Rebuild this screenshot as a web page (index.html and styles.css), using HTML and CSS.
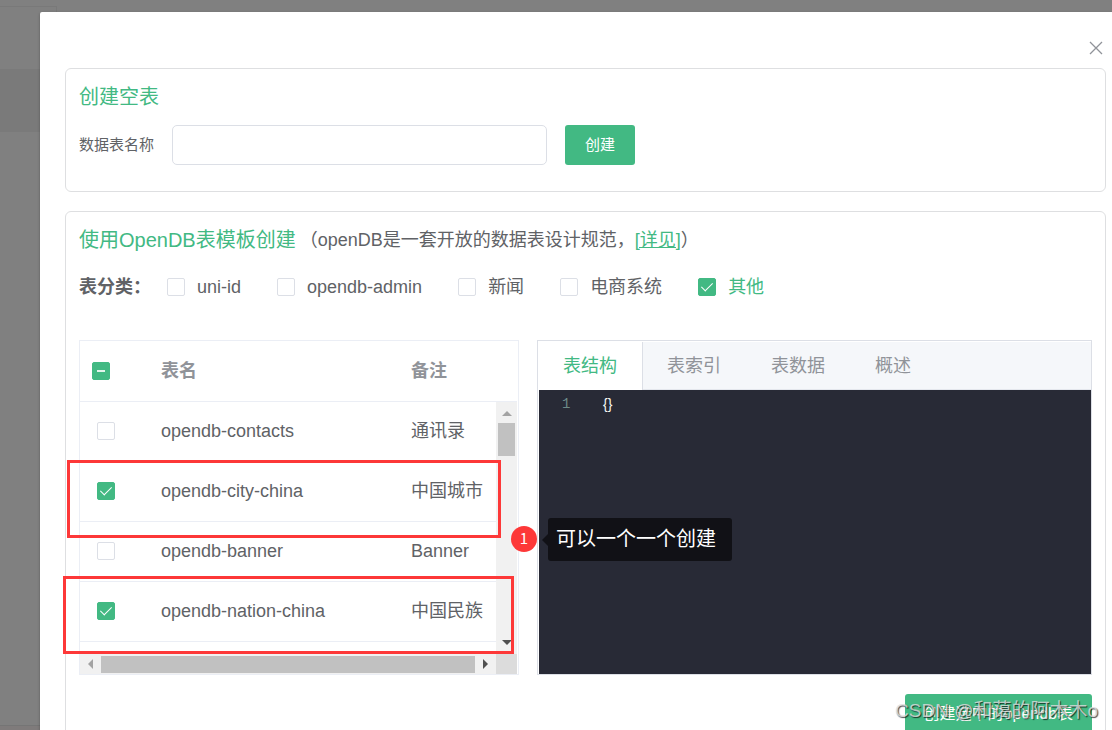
FILE: index.html
```html
<!DOCTYPE html>
<html lang="zh-CN">
<head>
<meta charset="utf-8">
<title>创建表</title>
<link rel="stylesheet" href="styles.css">
</head>
<body>
<div class="backdrop">
  <aside class="rail">
    <div class="rail-top"></div>
    <div class="rail-space"></div>
    <div class="rail-active"></div>
    <div class="rail-foot"></div>
  </aside>
  <main class="dialog" role="dialog" aria-label="创建表">
    <header class="dialog-head">
      <button class="close" type="button" aria-label="关闭">
        <svg width="14" height="14" viewBox="0 0 14 14"><path d="M1 1L13 13M13 1L1 13" fill="none" stroke="#909399" stroke-width="1.3"/></svg>
      </button>
    </header>

    <section class="card">
      <h2 class="title">创建空表</h2>
      <form class="create-form">
        <label for="table-name">数据表名称</label>
        <input class="text-input" id="table-name" type="text">
        <button class="btn" type="button">创建</button>
      </form>
    </section>

    <section class="card">
      <div class="title-row">
        <h2 class="title">使用OpenDB表模板创建</h2>
        <p class="note">（openDB是一套开放的数据表设计规范，<a href="#">[详见]</a>）</p>
      </div>
      <div class="filters">
        <strong class="filters-label">表分类：</strong>
        <label class="filter"><input class="check" type="checkbox"><span>uni-id</span></label>
        <label class="filter"><input class="check" type="checkbox"><span>opendb-admin</span></label>
        <label class="filter"><input class="check" type="checkbox"><span>新闻</span></label>
        <label class="filter"><input class="check" type="checkbox"><span>电商系统</span></label>
        <label class="filter filter-on"><input class="check" type="checkbox" checked><span>其他</span></label>
      </div>

      <div class="panels">
        <div class="list">
          <table class="table">
            <thead>
              <tr><th class="col-check"><input class="check check-mixed" type="checkbox" aria-label="全选"></th><th class="col-name">表名</th><th>备注</th></tr>
            </thead>
            <tbody>
              <tr><td class="col-check"><input class="check" type="checkbox" aria-label="opendb-contacts"></td><td>opendb-contacts</td><td>通讯录</td></tr>
              <tr><td class="col-check"><input class="check" type="checkbox" aria-label="opendb-city-china" checked></td><td>opendb-city-china</td><td>中国城市</td></tr>
              <tr><td class="col-check"><input class="check" type="checkbox" aria-label="opendb-banner"></td><td>opendb-banner</td><td>Banner</td></tr>
              <tr><td class="col-check"><input class="check" type="checkbox" aria-label="opendb-nation-china" checked></td><td>opendb-nation-china</td><td>中国民族</td></tr>
            </tbody>
          </table>
          <div class="vbar">
            <svg width="10" height="5" viewBox="0 0 10 5"><path d="M0 5L5 0L10 5Z" fill="#a3a3a3"/></svg>
            <div class="vthumb"></div>
            <svg class="arrow-down" width="10" height="5" viewBox="0 0 10 5"><path d="M0 0L5 5L10 0Z" fill="#505050"/></svg>
          </div>
          <div class="hbar">
            <svg width="5" height="10" viewBox="0 0 5 10"><path d="M5 0L0 5L5 10Z" fill="#a3a3a3"/></svg>
            <div class="hthumb"></div>
            <svg width="5" height="10" viewBox="0 0 5 10"><path d="M0 0L5 5L0 10Z" fill="#505050"/></svg>
          </div>
          <div class="corner"></div>
        </div>

        <div class="detail">
          <div class="tabs" role="tablist">
            <button class="tab tab-on" type="button" role="tab" aria-selected="true">表结构</button>
            <button class="tab" type="button" role="tab">表索引</button>
            <button class="tab" type="button" role="tab">表数据</button>
            <button class="tab" type="button" role="tab">概述</button>
          </div>
          <div class="editor"><span class="line-no">1</span><code class="code">{}</code></div>
        </div>

        <div class="mark mark-city"></div>
        <div class="mark mark-nation"></div>
        <div class="step">1</div>
        <div class="tip">可以一个一个创建</div>
      </div>

      <div class="actions">
        <button class="btn btn-wide" type="button">创建选中的opendb表</button>
      </div>
    </section>
  </main>
  <div class="watermark">CSDN @和蔼的阿木木o</div>
</div>
</body>
</html>
```
FILE: styles.css
```css
* {
  box-sizing: border-box;
}

body {
  margin: 0;
  color: #606266;
  font: 18px/28px "Liberation Sans", "Noto Sans CJK SC", sans-serif;
}

button,
input {
  margin: 0;
  font: inherit;
}

h2,
p {
  margin: 0;
}

.backdrop {
  position: relative;
  display: flex;
  height: 100vh;
  overflow: hidden;
  background: #808080;
}

.rail {
  display: flex;
  flex: 0 0 40px;
  flex-direction: column;
  min-width: 0;
}

.rail-top {
  width: 57px;
  height: 7px;
  border-bottom: 1px solid #797979;
}

.rail-space {
  width: 57px;
  height: 62px;
  border-right: 1px solid #797979;
}

.rail-active {
  height: 63px;
  background: #7a7a7a;
}

.rail-foot {
  height: 5px;
  margin-top: auto;
  border-top: 1px solid #757575;
  background: #7f7b7b;
}

.dialog {
  position: relative;
  flex: 1;
  min-width: 0;
  align-self: flex-start;
  margin-top: 12px;
  padding: 0 6px 24px 25px;
  border-radius: 2px 0 0 0;
  background: #fff;
  box-shadow: 0 1px 3px rgba(0, 0, 0, 0.3);
}

.dialog-head {
  display: flex;
  justify-content: flex-end;
  height: 56px;
  padding: 29px 3px 0 0;
}

.close {
  display: flex;
  width: 14px;
  height: 14px;
  padding: 0;
  border: 0;
  background: none;
}

.card {
  margin-bottom: 19px;
  padding: 14px 13px 26px;
  border: 1px solid #dedfe1;
  border-radius: 6px;
}

.title {
  color: #42b983;
  font-size: 20px;
  font-weight: 400;
}

.create-form {
  display: flex;
  align-items: center;
  gap: 18px;
  margin-top: 14px;
  font-size: 15px;
}

.text-input {
  flex: 0 1 375px;
  min-width: 0;
  height: 40px;
  padding: 0 15px;
  border: 1px solid #dcdfe6;
  border-radius: 5px;
}

.btn {
  height: 40px;
  padding: 0 20px;
  border: 0;
  border-radius: 3px;
  background: #42b983;
  color: #fff;
  font-size: 15px;
}

.btn-wide {
  padding: 0 19px;
  font-size: 16px;
}

.title-row {
  display: flex;
  align-items: center;
  gap: 4px;
}

.note a {
  color: #42b983;
}

.filters {
  display: flex;
  align-items: center;
  gap: 36px;
  margin-top: 19px;
}

.filters-label {
  margin-right: -20px;
}

.filter {
  display: flex;
  align-items: center;
  gap: 12px;
}

.filter-on {
  color: #42b983;
}

.check {
  display: grid;
  flex: none;
  place-items: center;
  width: 18px;
  height: 18px;
  border: 1px solid #dcdfe6;
  border-radius: 2px;
  background: #fff;
  appearance: none;
}

.check:checked,
.check-mixed {
  border-color: #42b983;
  background: #42b983;
}

.check:checked::after {
  width: 5px;
  height: 10px;
  margin-bottom: 3px;
  border: solid #fff;
  border-width: 0 1px 1px 0;
  content: "";
  transform: rotate(45deg);
}

.check-mixed::after {
  width: 8px;
  height: 2px;
  background: #e3f5ec;
  content: "";
}

.panels {
  position: relative;
  display: grid;
  grid-template-columns: minmax(0, 440fr) minmax(0, 555fr);
  gap: 18px;
  margin-top: 39px;
}

.list {
  display: grid;
  grid-template-rows: 1fr 20px;
  grid-template-columns: minmax(0, 1fr) 21px;
  padding-right: 1px;
  border: 1px solid #ebeef5;
}

.table {
  grid-row: 1;
  grid-column: 1 / 3;
  width: 100%;
  margin-bottom: 12px;
  border-spacing: 0;
  table-layout: fixed;
}

.table th,
.table td {
  height: 60px;
  padding: 0 0 2px 11px;
  border-bottom: 1px solid #ebeef5;
  text-align: left;
  white-space: nowrap;
}

.table th {
  height: 61px;
  padding-bottom: 0;
  color: #909399;
}

.table .col-check {
  width: 70px;
  padding-left: 17px;
}

.table th.col-check {
  padding-left: 12px;
}

.table .col-name {
  width: 250px;
}

.vbar {
  z-index: 1;
  display: flex;
  grid-row: 1;
  grid-column: 2;
  flex-direction: column;
  align-items: center;
  margin-top: 61px;
  padding: 9px 0 9px;
  background: #f1f1f1;
}

.vthumb {
  width: 17px;
  height: 33px;
  margin-top: 7px;
  background: #c1c1c1;
}

.arrow-down {
  margin-top: auto;
}

.hbar {
  display: flex;
  align-items: center;
  gap: 8px;
  padding: 0 8px;
  background: #f1f1f1;
}

.hthumb {
  flex: 1;
  height: 17px;
  background: #c1c1c1;
}

.corner {
  background: #dcdcdc;
}

.detail {
  display: flex;
  flex-direction: column;
  border: 1px solid #dcdfe6;
}

.tabs {
  display: flex;
  height: 49px;
  border-top: 1px solid #fff;
  border-bottom: 1px solid #e4e7ed;
  background: #f5f7fa;
}

.tab {
  padding: 0 25px;
  border: 0;
  background: none;
  color: #909399;
}

.tab-on {
  margin-bottom: -1px;
  background: #fff;
  box-shadow: 1px 0 #dcdfe6;
  color: #42b983;
}

.editor {
  display: flex;
  flex: 1;
  align-items: flex-start;
  margin-left: 1px;
  padding-left: 23px;
  background: #282a36;
  font-size: 14px;
}

.line-no {
  width: 41px;
  color: #6d8a88;
  font-family: "Liberation Mono", monospace;
}

.code {
  color: #f8f8f2;
  font-family: "Liberation Sans", sans-serif;
}

.mark {
  position: absolute;
  z-index: 2;
  height: 78px;
  border: 3px solid #fd3838;
}

.mark-city {
  top: 120px;
  left: -12px;
  width: 434px;
}

.mark-nation {
  top: 236px;
  left: -16px;
  width: 451px;
}

.step {
  position: absolute;
  z-index: 2;
  top: 186px;
  left: 432px;
  width: 26px;
  height: 26px;
  border-radius: 50%;
  background: #fd3838;
  color: #fff;
  font: 15px/24px "Noto Sans CJK SC", sans-serif;
  text-align: center;
}

.tip {
  position: absolute;
  z-index: 2;
  top: 178px;
  left: 469px;
  width: 184px;
  padding: 0 8px;
  border-radius: 3px;
  background: #111116;
  color: #fff;
  font-size: 20px;
  line-height: 43px;
  white-space: nowrap;
}

.tip::before {
  position: absolute;
  top: 16px;
  right: 100%;
  border: solid transparent;
  border-width: 6px 6px 6px 0;
  border-right-color: #111116;
  content: "";
}

.actions {
  display: flex;
  justify-content: flex-end;
  margin-top: 19px;
}

.watermark {
  position: absolute;
  right: 14px;
  bottom: 5px;
  color: rgba(225, 225, 225, 0.8);
  font-size: 19px;
  text-shadow: 1px 1px 1px rgba(0, 0, 0, 0.7);
}
```
